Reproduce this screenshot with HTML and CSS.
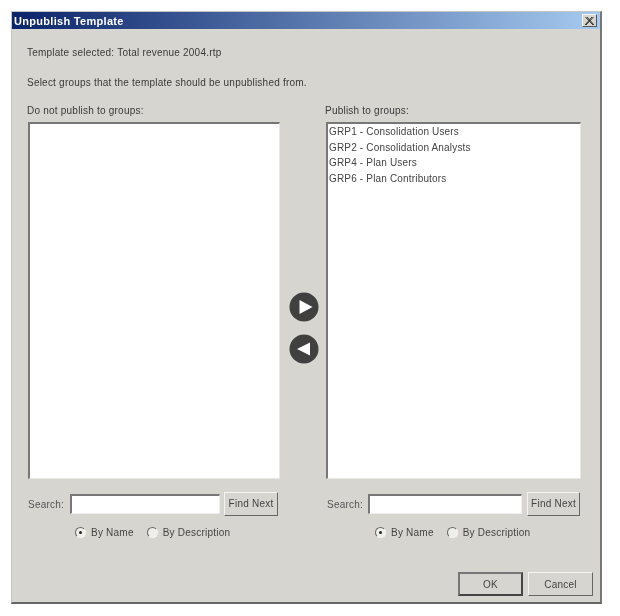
FILE: index.html
```html
<!DOCTYPE html>
<html lang="en">
<head>
<meta charset="utf-8">
<title>Unpublish Template</title>
<link rel="stylesheet" href="styles.css">
</head>
<body>
<div class="dialog">
  <div class="titlebar">
    <span class="title">Unpublish Template</span>
    <span class="close"><svg width="9" height="8" viewBox="0 0 9 8"><path d="M0.5 0L8 8M2 0L9 8M8.5 0L1 8M7 0L0 8" stroke="#222" stroke-width="0.9" fill="none"/></svg></span>
  </div>
  <div class="content">
    <p class="line first">Template selected: Total revenue 2004.rtp</p>
    <p class="line second">Select groups that the template should be unpublished from.</p>
    <div class="columns">
      <section class="col left">
        <div class="label">Do not publish to groups:</div>
        <div class="list"></div>
        <div class="search">
          <span class="search-label">Search:</span>
          <span class="input"></span>
          <span class="btn find">Find Next</span>
        </div>
        <div class="radios">
          <span class="radio on"></span><span class="radio-text">By Name</span>
          <span class="radio"></span><span class="radio-text">By Description</span>
        </div>
      </section>
      <div class="arrows">
        <svg class="arrow" width="30" height="30" viewBox="0 0 30 30"><circle cx="15" cy="15" r="14.5" fill="#404040"/><path d="M10.5 8L23.5 15L10.5 22Z" fill="#fff"/></svg>
        <svg class="arrow" width="30" height="30" viewBox="0 0 30 30"><circle cx="15" cy="15" r="14.5" fill="#404040"/><path d="M21 8.5L8 15L21 21.5Z" fill="#fff"/></svg>
      </div>
      <section class="col right">
        <div class="label">Publish to groups:</div>
        <div class="list">
          <div class="item">GRP1 - Consolidation Users</div>
          <div class="item">GRP2 - Consolidation Analysts</div>
          <div class="item">GRP4 - Plan Users</div>
          <div class="item">GRP6 - Plan Contributors</div>
        </div>
        <div class="search">
          <span class="search-label">Search:</span>
          <span class="input"></span>
          <span class="btn find">Find Next</span>
        </div>
        <div class="radios">
          <span class="radio on"></span><span class="radio-text">By Name</span>
          <span class="radio"></span><span class="radio-text">By Description</span>
        </div>
      </section>
    </div>
    <div class="footer">
      <span class="btn action default">OK</span>
      <span class="btn action">Cancel</span>
    </div>
  </div>
</div>
</body>
</html>
```

FILE: styles.css
```css
* { box-sizing: border-box; }
html, body { margin: 0; height: 100%; background: #fff; }
body {
  padding: 11px 0 0 11px;
  font-family: "Liberation Sans", Arial, sans-serif;
  font-size: 10px;
  letter-spacing: 0.22px;
  color: #3a3a3a;
  overflow: hidden;
}
.dialog {
  width: 591px;
  height: 593px;
  background: #d6d5cf;
  border-top: 1px solid #c4c4c0;
  border-left: 1px solid #c4c4c0;
  border-right: 2px solid #777;
  border-bottom: 2px solid #666;
  display: flex;
  flex-direction: column;
  filter: blur(0.5px);
}
.titlebar {
  height: 17px;
  background: linear-gradient(90deg, #0a246a, #a6caf0);
  display: flex;
  align-items: center;
  justify-content: space-between;
  padding: 0 3px 0 2px;
  flex: none;
}
.title { color: #fff; font-weight: bold; font-size: 11px; letter-spacing: 0.3px; }
.close {
  width: 15px;
  height: 13px;
  background: #d6d5cf;
  border: 1px solid;
  border-color: #f4f4f0 #555 #555 #f4f4f0;
  display: flex;
  align-items: center;
  justify-content: center;
}
.content { flex: 1; padding: 0 19px 0 15px; display: flex; flex-direction: column; }
.line { margin: 0; line-height: 12px; }
.first { margin-top: 18px; }
.second { margin-top: 18px; }
.columns {
  margin-top: 16px;
  display: grid;
  grid-template-columns: 253px 46px 255px;
  flex: none;
}
.label { line-height: 12px; height: 12px; }
.list {
  margin: 5px 0 0 1px;
  height: 357px;
  background: #fff;
  border: 1px solid;
  border-color: #777 #e8e8e4 #e8e8e4 #777;
  border-width: 2px 1px 1px 2px;
  padding: 0 0 0 1px;
}
.right .list { margin-left: 0; }
.right .label { margin-left: -1px; }
.item { line-height: 15.5px; white-space: pre; color: #444; letter-spacing: 0.17px; }
.search { display: flex; align-items: center; margin-top: 12px; height: 25px; }
.search-label { width: 43px; padding-left: 1px; padding-top: 1px; color: #555; }
.input {
  width: 150px;
  height: 20px;
  background: #fff;
  border: 1px solid;
  border-color: #777 #eee #eee #777;
  border-width: 2px 1px 1px 2px;
}
.btn {
  background: #d6d5cf;
  border: 1px solid;
  border-color: #f4f4f0 #666 #666 #f4f4f0;
  display: flex;
  align-items: center;
  justify-content: center;
  color: #444;
}
.find { width: 54px; height: 24px; margin-left: 4px; }
.right .search-label { width: 42px; }
.right .input { width: 154px; }
.right .find { margin-left: 5px; width: 53px; }
.radios { display: flex; align-items: center; margin-top: 9px; padding-left: 48px; height: 14px; }
.right .radios { padding-left: 49px; }
.radio {
  width: 11px;
  height: 11px;
  border-radius: 50%;
  background: #eeeeea;
  border: 1px solid;
  border-color: #666 #f4f4f0 #f4f4f0 #666;
  position: relative;
}
.radio.on::after {
  content: "";
  position: absolute;
  left: 3px;
  top: 3px;
  width: 3px;
  height: 3px;
  border-radius: 50%;
  background: #222;
}
.radio-text { margin-left: 5px; margin-right: 13px; color: #444; }
.arrows {
  display: flex;
  flex-direction: column;
  align-items: center;
  gap: 12px;
  padding-top: 187px;
  padding-left: 2px;
}
.footer { display: flex; justify-content: flex-end; gap: 5px; padding-top: 33px; margin-right: -12px; }
.action { width: 65px; height: 24px; }
.default { border: 2px solid; border-color: #777 #444 #444 #777; }
```
